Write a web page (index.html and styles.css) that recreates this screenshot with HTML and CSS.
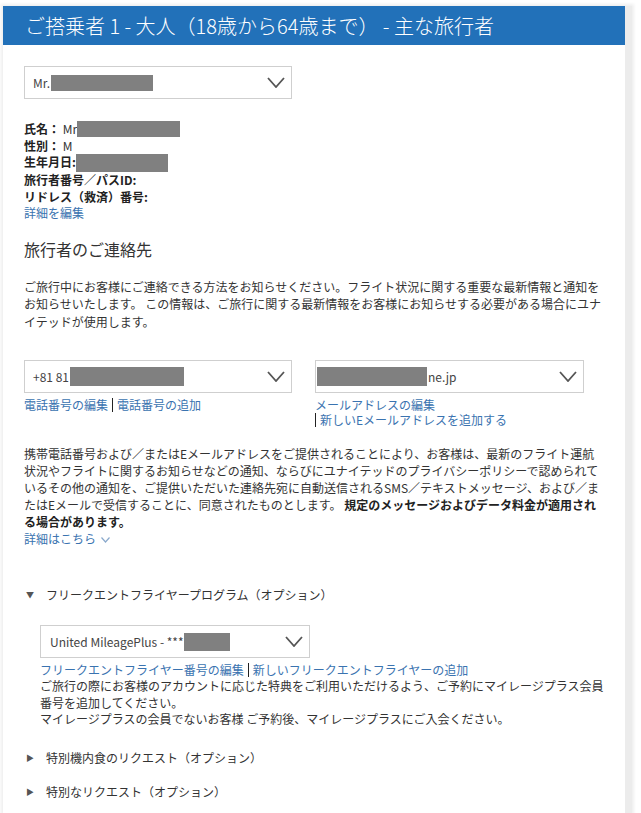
FILE: index.html
```html
<!DOCTYPE html>
<html lang="ja">
<head>
  <meta charset="UTF-8" />
  <title>ご搭乗者情報</title>
  <link rel="stylesheet" href="styles.css">
</head>
<body>
  <div class="panel">
    <h1 class="panel-title">ご搭乗者 1 - 大人（18歳から64歳まで） - 主な旅行者</h1>

    <div class="panel-body">
      <div class="select select-name">
        <span class="select-value">Mr.<span class="mask mask-name"></span></span>
        <svg class="chevron" width="18" height="11" viewBox="0 0 18 11"><path d="M1 1 L9 10 L17 1" /></svg>
      </div>

      <div class="traveler-info">
        <div><b>氏名：</b> Mr<span class="mask mask-full"></span></div>
        <div><b>性別：</b> M</div>
        <div><b>生年月日:</b><span class="mask mask-dob"></span></div>
        <div><b>旅行者番号／パスID:</b></div>
        <div><b>リドレス（救済）番号:</b></div>
        <a href="#" class="link">詳細を編集</a>
      </div>

      <h2 class="section-title">旅行者のご連絡先</h2>
      <p class="intro">ご旅行中にお客様にご連絡できる方法をお知らせください。フライト状況に関する重要な最新情報と通知をお知らせいたします。 この情報は、ご旅行に関する最新情報をお客様にお知らせする必要がある場合にユナイテッドが使用します。</p>

      <div class="contact-row">
        <div class="contact-col">
          <div class="select">
            <span class="select-value">+81 81<span class="mask mask-phone"></span></span>
            <svg class="chevron" width="18" height="11" viewBox="0 0 18 11"><path d="M1 1 L9 10 L17 1" /></svg>
          </div>
          <div class="links">
            <a href="#" class="link">電話番号の編集</a><a href="#" class="link sep">電話番号の追加</a>
          </div>
        </div>
        <div class="contact-col">
          <div class="select select-email">
            <span class="select-value"><span class="mask mask-email"></span>ne.jp</span>
            <svg class="chevron" width="18" height="11" viewBox="0 0 18 11"><path d="M1 1 L9 10 L17 1" /></svg>
          </div>
          <div class="links links-email">
            <a href="#" class="link">メールアドレスの編集</a> <a href="#" class="link sep">新しいEメールアドレスを追加する</a>
          </div>
        </div>
      </div>

      <p class="consent">携帯電話番号および／またはEメールアドレスをご提供されることにより、お客様は、最新のフライト運航状況やフライトに関するお知らせなどの通知、ならびにユナイテッドのプライバシーポリシーで認められているその他の通知を、ご提供いただいた連絡先宛に自動送信されるSMS／テキストメッセージ、および／またはEメールで受信することに、同意されたものとします。 <b>規定のメッセージおよびデータ料金が適用される場合があります。</b><br><a href="#" class="link">詳細はこちら <svg class="more" width="9" height="6" viewBox="0 0 9 6"><path d="M0.5 0.5 L4.5 5 L8.5 0.5" /></svg></a></p>

      <div class="toggle open"><span class="arrow">&#9660;</span>フリークエントフライヤープログラム（オプション）</div>
      <div class="ff-body">
        <div class="select select-ff">
          <span class="select-value">United MileagePlus - ***<span class="mask mask-ff"></span></span>
          <svg class="chevron" width="18" height="11" viewBox="0 0 18 11"><path d="M1 1 L9 10 L17 1" /></svg>
        </div>
        <div class="ff-text">
          <a href="#" class="link">フリークエントフライヤー番号の編集</a><a href="#" class="link sep">新しいフリークエントフライヤーの追加</a><br>
          ご旅行の際にお客様のアカウントに応じた特典をご利用いただけるよう、ご予約にマイレージプラス会員番号を追加してください。<br>
          マイレージプラスの会員でないお客様 ご予約後、マイレージプラスにご入会ください。
        </div>
      </div>

      <div class="toggle"><span class="arrow">&#9654;</span>特別機内食のリクエスト（オプション）</div>
      <div class="toggle"><span class="arrow">&#9654;</span>特別なリクエスト（オプション）</div>
    </div>
  </div>
</body>
</html>
```

FILE: styles.css
```css
body {
  margin: 0;
  background: #fff;
  font-family: "Noto Sans CJK JP", "Noto Sans", sans-serif;
  font-size: 12px;
  color: #333;
}
.panel {
  width: 622px;
  height: 807px;
  margin: 6px 0 0 3px;
  background: #fff;
  box-shadow: 0 0 3px 2px #efefef;
  border-right: 7px solid #ececec;
  overflow: hidden;
}
.panel-title {
  margin: 0;
  height: 39px;
  padding-left: 22px;
  background: #2271b9;
  color: #fff;
  font-size: 20px;
  font-weight: 300;
  line-height: 39px;
  white-space: nowrap;
}
.panel-body {
  padding: 21px 20px 0 21px;
}
a.link {
  color: #3a73b0;
  text-decoration: none;
}
.link.sep {
  display: inline-block;
  border-left: 1px solid #222;
  margin-left: 4px;
  padding-left: 4px;
  line-height: 14px;
}
.links-email .link.sep {
  margin-left: 0;
}

.select {
  position: relative;
  box-sizing: border-box;
  width: 268px;
  height: 33px;
  border: 1px solid #cfcfcf;
  background: #fff;
  display: flex;
  align-items: center;
  padding-left: 8px;
}
.select-value {
  display: flex;
  align-items: center;
  font-size: 12px;
  color: #444;
}
.select-email { width: 269px; padding-left: 1px; }
.chevron {
  margin-left: auto;
  margin-right: 6px;
  fill: none;
  stroke: #555;
  stroke-width: 1.8;
}
.mask {
  display: inline-block;
  background: #808080;
}
.mask-name { width: 102px; height: 16px; margin-left: 1px; }
.mask-phone { width: 114px; height: 19px; margin-left: 1px; }
.mask-email { width: 110px; height: 19px; margin-right: 1px; }
.mask-ff { width: 46px; height: 18px; }
.mask-full { width: 103px; height: 16px; vertical-align: -3px; }
.mask-dob { width: 92px; height: 18px; vertical-align: -5px; }

.traveler-info {
  margin-top: 22px;
  line-height: 16.5px;
}
.traveler-info b {
  color: #222;
}
.section-title {
  margin: 15px 0 0;
  font-size: 16px;
  font-weight: normal;
  line-height: 24px;
  color: #333;
}
.intro {
  margin: 17px 0 0;
  line-height: 17.5px;
}

.contact-row {
  display: flex;
  gap: 22px;
  margin-top: 30px;
}
.contact-col {
  width: 269px;
}
.links {
  margin-top: 5px;
  line-height: 14.5px;
}

.consent {
  margin: 18px 0 0;
  line-height: 17px;
}
.consent b { color: #222; }
.more {
  fill: none;
  stroke: #8aa9cc;
  stroke-width: 1.2;
  margin-left: 2px;
  vertical-align: 1px;
}

.toggle {
  display: flex;
  align-items: center;
  line-height: 17px;
  margin-top: 17px;
  color: #333;
}
.toggle.open { margin-top: 39px; }
.arrow {
  width: 20px;
  margin-left: 2px;
  font-size: 8px;
  color: #555;
}
.ff-body {
  padding-left: 16px;
  margin-top: 22px;
}
.select-ff { width: 270px; padding-left: 9px; }
.ff-text {
  margin-top: 4px;
  line-height: 16.3px;
}
.ff-body + .toggle { margin-top: 22px; }
```
